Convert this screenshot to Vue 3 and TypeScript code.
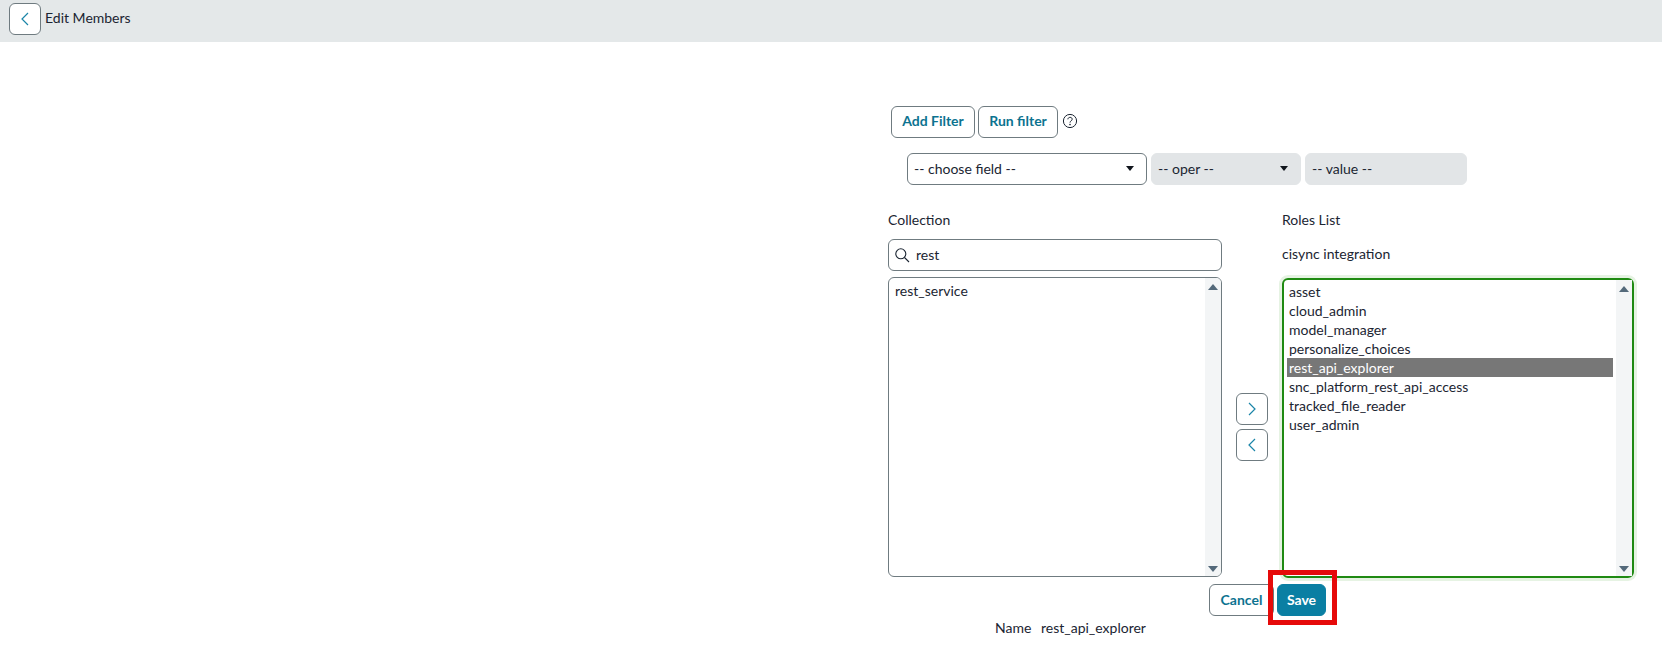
<script setup lang="ts">
const collection = ['rest_service']
const roles = [
  'asset',
  'cloud_admin',
  'model_manager',
  'personalize_choices',
  'rest_api_explorer',
  'snc_platform_rest_api_access',
  'tracked_file_reader',
  'user_admin',
]
const selectedRole = 'rest_api_explorer'
</script>

<template>
  <div class="page">
    <header class="topbar">
      <button class="icon-btn back" aria-label="Back">
        <svg width="12" height="16" viewBox="0 0 12 16"><path d="M9 2 L3 8 L9 14" /></svg>
      </button>
      <span class="title">Edit Members</span>
    </header>

    <main class="content">
      <div class="filter-actions">
        <button class="btn">Add Filter</button>
        <button class="btn run">Run filter</button>
        <svg class="help" width="16" height="16" viewBox="0 0 16 16">
          <circle cx="8" cy="8" r="6.6" />
          <path d="M5.9 6.3 C5.9 3.7 10.2 3.7 10.2 6.2 C10.2 7.9 8 7.8 8 9.6" />
          <circle class="dot" cx="8" cy="11.6" r="0.8" />
        </svg>
      </div>

      <div class="filter-fields">
        <div class="field choose">
          <span>-- choose field --</span>
          <i class="caret"></i>
        </div>
        <div class="field oper disabled">
          <span>-- oper --</span>
          <i class="caret"></i>
        </div>
        <div class="field value disabled">
          <span>-- value --</span>
        </div>
      </div>

      <div class="slush">
        <div class="label">Collection</div>
        <div class="spacer"></div>
        <div class="label">Roles List</div>

        <div class="search">
          <svg width="16" height="16" viewBox="0 0 16 16">
            <circle cx="6.8" cy="6.8" r="5" />
            <path d="M10.5 10.5 L15 15" />
          </svg>
          <input value="rest" />
        </div>
        <div class="spacer"></div>
        <div class="sub-label">cisync integration</div>

        <div class="listbox">
          <ul>
            <li v-for="item in collection" :key="item">{{ item }}</li>
          </ul>
          <div class="scroll">
            <i class="arrow up"></i>
            <i class="arrow down"></i>
          </div>
        </div>

        <div class="move">
          <button class="icon-btn" aria-label="Add">
            <svg width="12" height="16" viewBox="0 0 12 16"><path d="M3 2 L9 8 L3 14" /></svg>
          </button>
          <button class="icon-btn" aria-label="Remove">
            <svg width="12" height="16" viewBox="0 0 12 16"><path d="M9 2 L3 8 L9 14" /></svg>
          </button>
        </div>

        <div class="listbox focused">
          <ul>
            <li v-for="role in roles" :key="role" :class="{ selected: role === selectedRole }">{{ role }}</li>
          </ul>
          <div class="scroll">
            <i class="arrow up"></i>
            <i class="arrow down"></i>
          </div>
        </div>
      </div>

      <div class="form-actions">
        <button class="btn">Cancel</button>
        <div class="save-wrap">
          <button class="btn primary">Save</button>
          <div class="highlight"></div>
        </div>
      </div>

      <div class="name-row">
        <span class="name-label">Name</span>
        <span>rest_api_explorer</span>
      </div>
    </main>
  </div>
</template>

<style>
body {
  background: #fff;
}
</style>

<style scoped>
.page {
  font-family: Lato, "Open Sans", sans-serif;
  font-size: 14px;
  color: #1b2532;
  min-height: 654px;
  background: #fff;
}

.topbar {
  height: 42px;
  box-sizing: border-box;
  background: #e4e8e9;
  display: flex;
  align-items: flex-start;
  padding: 3px 0 0 9px;
}
.title {
  margin-left: 4px;
  line-height: 32px;
  margin-top: -1px;
}

button {
  font-family: inherit;
  cursor: pointer;
}

.icon-btn {
  width: 32px;
  height: 32px;
  padding: 0;
  box-sizing: border-box;
  background: #fff;
  border: 1px solid #6f7b80;
  border-radius: 6px;
  display: flex;
  align-items: center;
  justify-content: center;
}
.icon-btn svg path {
  fill: none;
  stroke: #1a85a8;
  stroke-width: 1.2;
}

.content {
  padding: 64px 0 0 888px;
}

.filter-actions {
  display: flex;
  align-items: center;
  margin-left: 3px;
  height: 32px;
}
.btn {
  height: 32px;
  box-sizing: border-box;
  padding: 0 10px 2px;
  background: #fff;
  color: #0c7390;
  font-size: 14px;
  font-weight: 700;
  border: 1px solid #6f7b80;
  border-radius: 6px;
}
.filter-actions .btn {
  width: 84px;
  padding-bottom: 4px;
}
.filter-actions .run {
  width: 80px;
  margin-left: 3px;
}
.help {
  margin: 0 0 2px 4px;
}
.help circle,
.help path {
  fill: none;
  stroke: #1b2532;
  stroke-width: 1;
}
.help .dot {
  fill: #1b2532;
  stroke: none;
}

.filter-fields {
  display: flex;
  gap: 4px;
  margin: 15px 0 0 19px;
}
.field {
  height: 32px;
  box-sizing: border-box;
  border: 1px solid #6f7b80;
  border-radius: 6px;
  padding: 0 12px 1px 6px;
  display: flex;
  align-items: center;
  justify-content: space-between;
  background: #fff;
}
.field.choose {
  width: 240px;
}
.field.oper {
  width: 150px;
}
.field.value {
  width: 162px;
}
.field.disabled {
  background: #e2e5e7;
  border-color: #e2e5e7;
}
.caret {
  width: 0;
  height: 0;
  border-left: 4.5px solid transparent;
  border-right: 4.5px solid transparent;
  border-top: 5px solid #10151c;
}

.slush {
  display: grid;
  grid-template-columns: 334px 60px 352px;
  grid-template-rows: 18px 42px 307px;
  margin-top: 26px;
}
.label {
  line-height: 18px;
}
.search {
  margin-top: 10px;
  height: 32px;
  box-sizing: border-box;
  border: 1px solid #6f7b80;
  border-radius: 6px;
  display: flex;
  align-items: center;
  padding-left: 5px;
}
.search svg circle,
.search svg path {
  fill: none;
  stroke: #1b2532;
  stroke-width: 1.1;
}
.search input {
  border: 0;
  outline: 0;
  flex: 1;
  min-width: 0;
  margin: 0 0 2px 6px;
  padding: 1px 0;
  font: inherit;
  color: inherit;
  background: transparent;
}
.sub-label {
  margin-top: 9px;
  line-height: 32px;
}

.listbox {
  height: 300px;
  margin-top: 6px;
  box-sizing: border-box;
  border: 1px solid #6f7b80;
  border-radius: 6px;
  display: flex;
  overflow: hidden;
}
.listbox.focused {
  margin-top: 7px;
  border: 2px solid #1f8a12;
  box-shadow: 0 0 0 3px #e6f3e3;
  overflow: visible;
}
.listbox ul {
  flex: 1;
  margin: 0;
  padding: 3px 5px;
  list-style: none;
  line-height: 19px;
}
.listbox.focused ul {
  padding: 2px 3px 2px 3px;
}
.listbox li {
  padding-left: 1px;
}
.listbox.focused li {
  padding-left: 2px;
}
.listbox li.selected {
  background: #777;
  color: #fff;
}
.scroll {
  width: 16px;
  background: #f3f5f6;
  display: flex;
  flex-direction: column;
  justify-content: space-between;
  align-items: center;
  padding: 6px 0 4px;
}
.arrow {
  width: 0;
  height: 0;
  border-left: 5px solid transparent;
  border-right: 5px solid transparent;
}
.arrow.up {
  border-bottom: 6px solid #53697a;
}
.arrow.down {
  border-top: 6px solid #53697a;
}

.move {
  display: flex;
  flex-direction: column;
  justify-content: center;
  gap: 4px;
  padding: 4px 0 0 14px;
}

.form-actions {
  display: flex;
  margin: 6px 0 0 321px;
}
.form-actions .btn {
  width: 65px;
  padding: 0 0 2px;
}
.save-wrap {
  position: relative;
  margin-left: 3px;
}
.form-actions .primary {
  width: 49px;
  background: #0a7fa3;
  border-color: #0a7fa3;
  color: #fff;
}
.highlight {
  position: absolute;
  left: -9px;
  right: -11px;
  top: -14px;
  bottom: -9px;
  border: 5px solid #e60a0a;
  pointer-events: none;
}

.name-row {
  margin: 3px 0 0 107px;
  line-height: 18px;
  display: flex;
}
.name-label {
  width: 46px;
}
</style>
